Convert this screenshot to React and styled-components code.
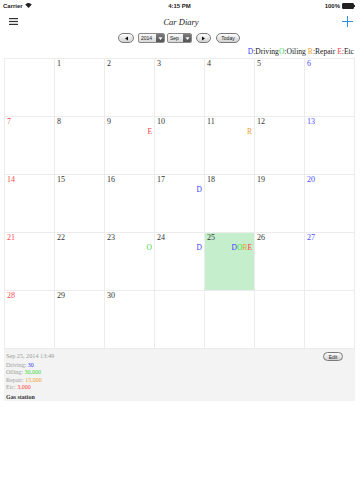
import React from "react";
import styled, { createGlobalStyle } from "styled-components";

const Global = createGlobalStyle`
  html, body { margin: 0; padding: 0; background: #fff; }
  body { font-family: "Liberation Serif", "Times New Roman", serif; }
`;

const Page = styled.div`
  width: 360px;
  height: 480px;
  background: #fff;
  display: flex;
  flex-direction: column;
`;

const StatusBar = styled.div`
  height: 11px;
  display: grid;
  grid-template-columns: 1fr auto 1fr;
  align-items: center;
  padding: 0 4px 0 3px;
  font-family: "Liberation Sans", Arial, sans-serif;
  font-size: 6px;
  font-weight: bold;
  color: #222;
`;

const StatusLeft = styled.div`
  display: flex;
  align-items: center;
  gap: 2px;
`;

const StatusRight = styled.div`
  display: flex;
  align-items: center;
  justify-content: flex-end;
  gap: 2px;
`;

const Battery = styled.div`
  width: 10px;
  height: 4px;
  background: #222;
  border: 0.5px solid #222;
  border-radius: 1px;
  position: relative;
  margin-right: 2px;
  &::after {
    content: "";
    position: absolute;
    right: -2px;
    top: 1px;
    width: 1px;
    height: 2px;
    background: #222;
  }
`;

const NavBar = styled.div`
  height: 21px;
  display: grid;
  grid-template-columns: 40px 1fr 40px;
  align-items: center;
  padding: 0 7px 0 9px;
`;

const Title = styled.div`
  text-align: center;
  font-style: italic;
  font-size: 8.5px;
  color: #222;
`;

const PlusWrap = styled.div`
  display: flex;
  justify-content: flex-end;
`;

const Toolbar = styled.div`
  height: 12px;
  display: flex;
  justify-content: center;
  align-items: center;
  padding-right: 2px;
`;

const PillButton = styled.div`
  width: ${(p) => p.$w}px;
  height: 8px;
  margin-left: ${(p) => p.$ml || 0}px;
  border: 1px solid #7a7a7a;
  border-radius: 6px;
  background: linear-gradient(#fdfdfd, #d2d2d2);
  display: flex;
  align-items: center;
  justify-content: center;
  font-family: "Liberation Sans", Arial, sans-serif;
  font-size: 5px;
  color: #222;
  box-sizing: content-box;
`;

const Select = styled.div`
  width: ${(p) => p.$w}px;
  height: 8px;
  margin-left: ${(p) => p.$ml || 0}px;
  border: 1px solid #8a8a8a;
  border-radius: 2px;
  background: linear-gradient(#fafafa, #d8d8d8);
  display: flex;
  align-items: stretch;
  font-family: "Liberation Sans", Arial, sans-serif;
  font-size: 5px;
  color: #222;
  overflow: hidden;
  box-sizing: content-box;
`;

const SelectText = styled.div`
  flex: 1;
  display: flex;
  align-items: center;
  padding-left: 2px;
`;

const SelectArrow = styled.div`
  width: 8px;
  background: linear-gradient(#7a7a7a, #555);
  display: flex;
  align-items: center;
  justify-content: center;
`;

const Legend = styled.div`
  height: 12px;
  margin-top: 2px;
  padding-right: 6px;
  text-align: right;
  font-size: 7.6px;
  line-height: 12px;
  color: #222;
`;

const Mark = styled.span`
  color: ${(p) => p.$c};
`;

const Grid = styled.div`
  margin: 0 0 0 4px;
  width: 351px;
  display: grid;
  grid-template-columns: repeat(7, 49px);
  grid-auto-rows: 57px;
  gap: 1px;
  padding: 1px;
  box-sizing: border-box;
  background: #ececec;
`;

const Cell = styled.div`
  background: ${(p) => (p.$sel ? "#c5efcc" : "#fff")};
  display: flex;
  flex-direction: column;
  padding: 0 2px 0 2px;
`;

const DayNum = styled.div`
  font-size: 8px;
  line-height: 10px;
  color: ${(p) => p.$c};
`;

const Marks = styled.div`
  text-align: right;
  font-size: 7.5px;
  line-height: 10px;
`;

const Detail = styled.div`
  margin-left: 4px;
  width: 351px;
  height: 52px;
  background: #f3f3f3;
  padding: 3px 2px 0 2px;
  box-sizing: border-box;
  position: relative;
`;

const Stamp = styled.div`
  font-size: 6.2px;
  line-height: 8px;
  color: #9a9a9a;
`;

const Lines = styled.div`
  margin-top: 2px;
`;

const Line = styled.div`
  font-size: 6px;
  line-height: 7.3px;
  color: #a0a0a0;
`;

const Val = styled.span`
  color: ${(p) => p.$c};
`;

const Note = styled.div`
  margin-top: 1.5px;
  font-size: 6px;
  line-height: 8px;
  font-weight: bold;
  color: #333;
`;

const EditBtn = styled(PillButton)`
  position: absolute;
  right: 12px;
  top: 3px;
  height: 7px;
`;

const C = { D: "#3b3bff", O: "#38d838", R: "#f0a030", E: "#ff3b3b" };

const weeks = [
  [null, 1, 2, 3, 4, 5, 6],
  [7, 8, 9, 10, 11, 12, 13],
  [14, 15, 16, 17, 18, 19, 20],
  [21, 22, 23, 24, 25, 26, 27],
  [28, 29, 30, null, null, null, null],
];

const marks = {
  9: ["E"],
  11: ["R"],
  17: ["D"],
  23: ["O"],
  24: ["D"],
  25: ["D", "O", "R", "E"],
};

const dayColor = (col) =>
  col === 0 ? "#ff4a4a" : col === 6 ? "#4a4aff" : "#333333";

const Tri = ({ dir }) => (
  <svg width="5" height="5" viewBox="0 0 5 5">
    {dir === "left" && <polygon points="4,0.5 4,4.5 1,2.5" fill="#111" />}
    {dir === "right" && <polygon points="1,0.5 1,4.5 4,2.5" fill="#111" />}
    {dir === "down" && <polygon points="0.5,1.2 4.5,1.2 2.5,4" fill="#fff" />}
  </svg>
);

export default function App() {
  return (
    <Page>
      <Global />
      <StatusBar>
        <StatusLeft>
          <span>Carrier</span>
          <svg width="7" height="5" viewBox="0 0 14 10">
            <path d="M7 10 L0.5 3 A9.5 9.5 0 0 1 13.5 3 Z" fill="#222" />
          </svg>
        </StatusLeft>
        <span>4:15 PM</span>
        <StatusRight>
          <span>100%</span>
          <Battery />
        </StatusRight>
      </StatusBar>
      <NavBar>
        <svg width="9" height="7" viewBox="0 0 9 7">
          <rect x="0" y="0" width="9" height="1.2" fill="#333" />
          <rect x="0" y="2.9" width="9" height="1.2" fill="#333" />
          <rect x="0" y="5.8" width="9" height="1.2" fill="#333" />
        </svg>
        <Title>Car Diary</Title>
        <PlusWrap>
          <svg width="11" height="11" viewBox="0 0 11 11">
            <rect x="5" y="0" width="1" height="11" fill="#2f8ee0" />
            <rect x="0" y="5" width="11" height="1" fill="#2f8ee0" />
          </svg>
        </PlusWrap>
      </NavBar>
      <Toolbar>
        <PillButton $w={14}>
          <Tri dir="left" />
        </PillButton>
        <Select $w={25} $ml={4}>
          <SelectText>2014</SelectText>
          <SelectArrow>
            <Tri dir="down" />
          </SelectArrow>
        </Select>
        <Select $w={23} $ml={2}>
          <SelectText>Sep</SelectText>
          <SelectArrow>
            <Tri dir="down" />
          </SelectArrow>
        </Select>
        <PillButton $w={13} $ml={4}>
          <Tri dir="right" />
        </PillButton>
        <PillButton $w={22} $ml={5}>
          Today
        </PillButton>
      </Toolbar>
      <Legend>
        <Mark $c={C.D}>D</Mark>:Driving<Mark $c={C.O}>O</Mark>:Oiling{" "}
        <Mark $c={C.R}>R</Mark>:Repair <Mark $c={C.E}>E</Mark>:Etc
      </Legend>
      <Grid>
        {weeks.map((week, w) =>
          week.map((d, col) => (
            <Cell key={`${w}-${col}`} $sel={d === 25}>
              {d && <DayNum $c={dayColor(col)}>{d}</DayNum>}
              {d && marks[d] && (
                <Marks>
                  {marks[d].map((m) => (
                    <Mark key={m} $c={C[m]}>
                      {m}
                    </Mark>
                  ))}
                </Marks>
              )}
            </Cell>
          ))
        )}
      </Grid>
      <Detail>
        <Stamp>Sep 25, 2014 13:49</Stamp>
        <Lines>
          <Line>
            Driving: <Val $c={C.D}>30</Val>
          </Line>
          <Line>
            Oiling: <Val $c={C.O}>30,000</Val>
          </Line>
          <Line>
            Repair: <Val $c={C.R}>15,000</Val>
          </Line>
          <Line>
            Etc: <Val $c={C.E}>3,000</Val>
          </Line>
        </Lines>
        <Note>Gas station</Note>
        <EditBtn $w={18}>Edit</EditBtn>
      </Detail>
    </Page>
  );
}
